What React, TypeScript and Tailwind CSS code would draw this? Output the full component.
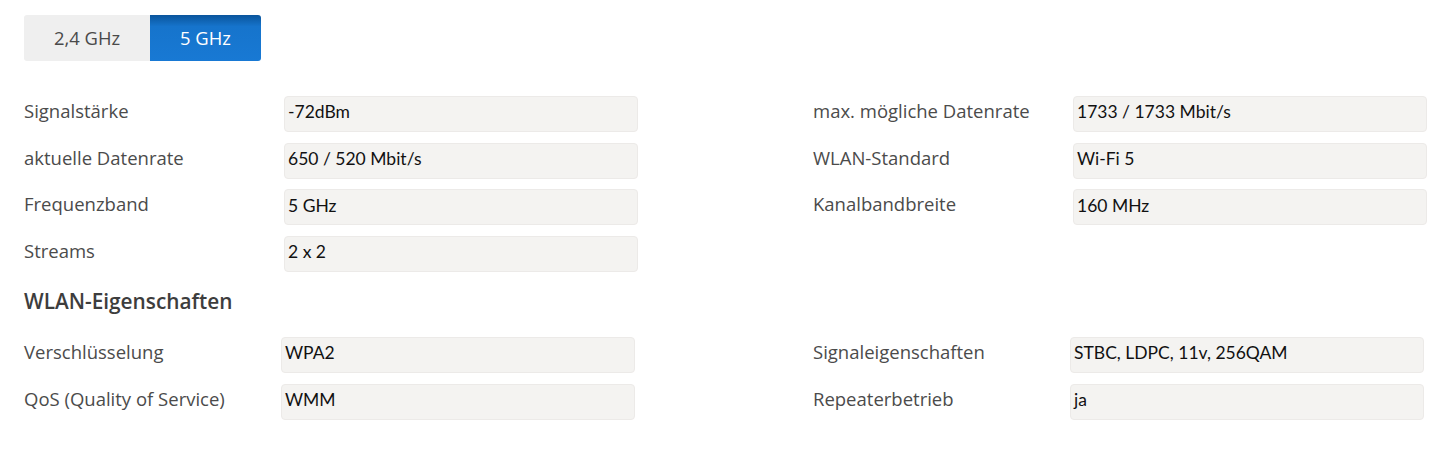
import React from "react";

const font = { fontFamily: "'Open Sans', 'Noto Sans', sans-serif" };
const valFont = { fontFamily: "Lato, 'Noto Sans', sans-serif" };

function Row({ label, value, labelW }: { label: string; value: string; labelW: string }) {
  return (
    <div className="flex items-start">
      <div className={`${labelW} shrink-0 text-[18.5px] leading-[30px] text-[#4b4b4b]`}>{label}</div>
      <div
        className="w-[354px] h-[36px] rounded-[4px] bg-[#f4f3f1] border border-[#eceae8] flex items-center px-[3px] pb-[3px] text-[17.5px] text-[#111111]"
        style={valFont}
      >
        {value}
      </div>
    </div>
  );
}

export default function App() {
  return (
    <div className="bg-white w-[1430px] h-[459px] pt-[15px] pl-[24px]" style={font}>
      <div className="flex h-[46px]">
        <div className="w-[126px] bg-[#efefef] rounded-l-[3px] flex items-center justify-center text-[18.4px] text-[#4a4a4a]">
          2,4 GHz
        </div>
        <div className="w-[111px] rounded-r-[3px] bg-gradient-to-b from-[#0a559c] via-[#1674cc] via-[25%] to-[#1879d4] flex items-center justify-center text-[18.4px] text-white">
          5 GHz
        </div>
      </div>

      <div className="mt-[35px] flex">
        <div className="flex flex-col gap-[10.67px]">
          <Row label="Signalstärke" value="-72dBm" labelW="w-[260px]" />
          <Row label="aktuelle Datenrate" value="650 / 520 Mbit/s" labelW="w-[260px]" />
          <Row label="Frequenzband" value="5 GHz" labelW="w-[260px]" />
          <Row label="Streams" value="2 x 2" labelW="w-[260px]" />
        </div>
        <div className="ml-[175px] flex flex-col gap-[10.67px]">
          <Row label="max. mögliche Datenrate" value="1733 / 1733 Mbit/s" labelW="w-[260px]" />
          <Row label="WLAN-Standard" value="Wi-Fi 5" labelW="w-[260px]" />
          <Row label="Kanalbandbreite" value="160 MHz" labelW="w-[260px]" />
        </div>
      </div>

      <h2 className="mt-[15px] text-[20.8px] leading-[28px] font-semibold text-[#3d3d3d]">WLAN-Eigenschaften</h2>

      <div className="mt-[22px] flex">
        <div className="flex flex-col gap-[10.67px]">
          <Row label="Verschlüsselung" value="WPA2" labelW="w-[257px]" />
          <Row label="QoS (Quality of Service)" value="WMM" labelW="w-[257px]" />
        </div>
        <div className="ml-[178px] flex flex-col gap-[10.67px]">
          <Row label="Signaleigenschaften" value="STBC, LDPC, 11v, 256QAM" labelW="w-[257px]" />
          <Row label="Repeaterbetrieb" value="ja" labelW="w-[257px]" />
        </div>
      </div>
    </div>
  );
}
